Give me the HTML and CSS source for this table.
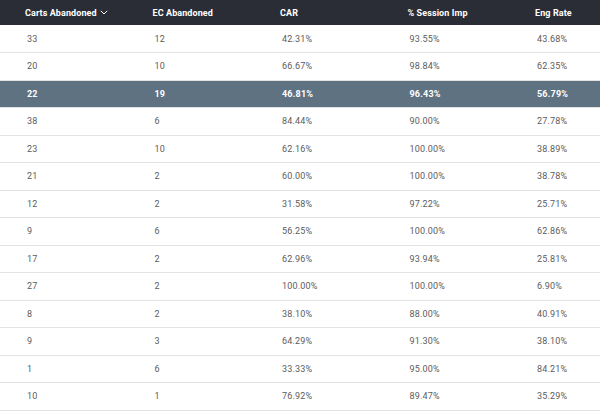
FILE: index.html
```html
<!DOCTYPE html>
<html>
<head>
<meta charset="utf-8">
<link rel="stylesheet" href="styles.css">
</head>
<body>
<div class="wrap">
<table class="grid">
<thead>
<tr>
<th>Carts Abandoned <svg class="caret" width="8" height="5" viewBox="0 0 8 5"><path d="M0.8 0.8 L4 4 L7.2 0.8" fill="none" stroke="#fff" stroke-width="1"/></svg></th>
<th>EC Abandoned</th>
<th>CAR</th>
<th>% Session Imp</th>
<th>Eng Rate</th>
</tr>
</thead>
<tbody>
<tr><td>33</td><td>12</td><td>42.31%</td><td>93.55%</td><td>43.68%</td></tr>
<tr><td>20</td><td>10</td><td>66.67%</td><td>98.84%</td><td>62.35%</td></tr>
<tr class="sel"><td>22</td><td>19</td><td>46.81%</td><td>96.43%</td><td>56.79%</td></tr>
<tr><td>38</td><td>6</td><td>84.44%</td><td>90.00%</td><td>27.78%</td></tr>
<tr><td>23</td><td>10</td><td>62.16%</td><td>100.00%</td><td>38.89%</td></tr>
<tr><td>21</td><td>2</td><td>60.00%</td><td>100.00%</td><td>38.78%</td></tr>
<tr><td>12</td><td>2</td><td>31.58%</td><td>97.22%</td><td>25.71%</td></tr>
<tr><td>9</td><td>6</td><td>56.25%</td><td>100.00%</td><td>62.86%</td></tr>
<tr><td>17</td><td>2</td><td>62.96%</td><td>93.94%</td><td>25.81%</td></tr>
<tr><td>27</td><td>2</td><td>100.00%</td><td>100.00%</td><td>6.90%</td></tr>
<tr><td>8</td><td>2</td><td>38.10%</td><td>88.00%</td><td>40.91%</td></tr>
<tr><td>9</td><td>3</td><td>64.29%</td><td>91.30%</td><td>38.10%</td></tr>
<tr><td>1</td><td>6</td><td>33.33%</td><td>95.00%</td><td>84.21%</td></tr>
<tr><td>10</td><td>1</td><td>76.92%</td><td>89.47%</td><td>35.29%</td></tr>
</tbody>
</table>
</div>
</body>
</html>
```
FILE: styles.css
```css
html, body {
  margin: 0;
  padding: 0;
  background: #ffffff;
}
.wrap {
  width: 600px;
  height: 412px;
  overflow: hidden;
}
.grid {
  border-collapse: collapse;
  table-layout: fixed;
  width: 637.5px;
  font-family: Roboto, "Liberation Sans", sans-serif;
}
.grid th, .grid td {
  width: 127.5px;
  text-align: left;
  white-space: nowrap;
  box-sizing: border-box;
}
.grid thead tr {
  background: #2a2d36;
  height: 25px;
}
.grid th {
  color: #ffffff;
  font-weight: 700;
  font-size: 9px;
  padding: 0 0 0 25px;
  letter-spacing: 0.1px;
}
.caret {
  vertical-align: middle;
  margin-left: 1px;
  margin-top: -2px;
}
.grid tbody tr {
  height: 27.5px;
  border-bottom: 1px solid #e3e3e3;
}
.grid td {
  color: #5c5c5c;
  font-size: 9px;
  padding: 0 0 0 27px;
  letter-spacing: 0.2px;
}
.grid tbody tr.sel {
  background: #5f7282;
}
.grid tr.sel td {
  color: #ffffff;
  font-weight: 700;
}
```
